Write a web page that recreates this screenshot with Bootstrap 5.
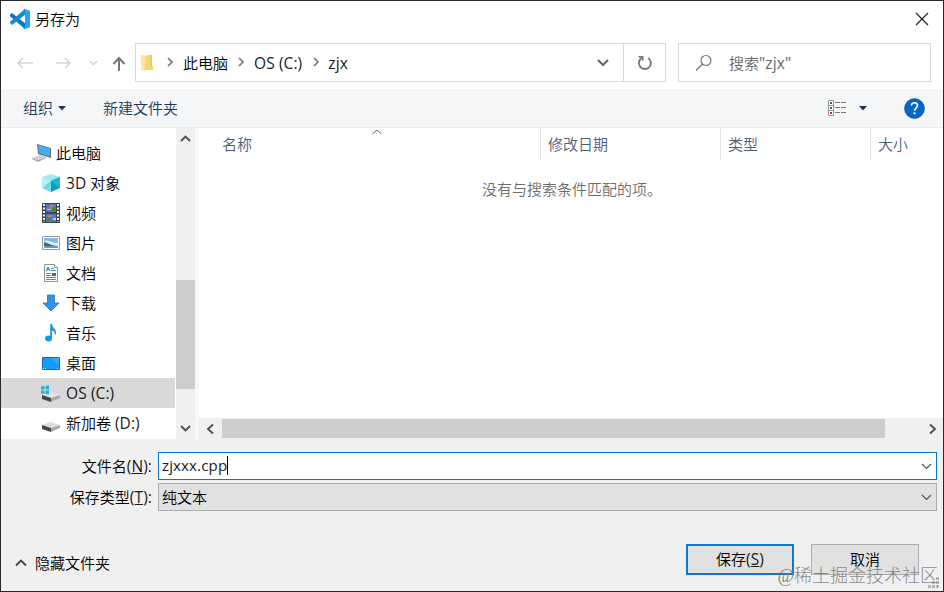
<!DOCTYPE html>
<html lang="zh-CN">
<head>
<meta charset="utf-8">
<meta name="viewport" content="width=device-width, initial-scale=1">
<title>另存为</title>
<link href="https://cdn.jsdelivr.net/npm/bootstrap@5.3.0/dist/css/bootstrap.min.css" rel="stylesheet">
<style>
body{font-family:"Open Sans","Noto Sans CJK SC",sans-serif;font-size:15px;font-weight:350;line-height:20px;color:#000;overflow:hidden}
svg{display:block;flex:none}
.lat{font-size:15.5px;font-weight:400;letter-spacing:.1px;color:#1a1a1a}
.search .lat{color:inherit}
.dialog{width:944px;height:592px;border:1px solid #29292b;background:#f0f0f0}
.titlebar{height:38px;padding:0 14px 2px 8px}
.addrbar{height:50px;padding:4px 12px 7px 16px}
.addr-box{width:531px;border:1px solid #d9d9d9;height:39px}
.crumb-gap{width:26px}
.crumb-gap.first{width:28px}
.refresh{width:42px;border-left:1px solid #d9d9d9}
.search{width:253px;height:39px;border:1px solid #d9d9d9;margin-left:12px;color:#666;padding-left:16px}
.toolbar{height:39px;background:#f4f6f8;border-bottom:1px solid #e9ebed;color:#1e395b;padding:0 18px 0 22px}
.new-folder{margin-left:36px}
.browse{height:311px}
.tree{width:175px;padding-top:10px;overflow:hidden}
.tree-item{height:30px;padding-left:39px}
.tree-item.root{padding-left:31px}
.tree-item.active{background:#d9d9d9;width:174px}
.tree-item svg{margin-right:4px}
.vbar{width:19px;background:#f0f0f0}
.vthumb{height:109px;margin-top:133px;background:#cdcdcd}
.vup{margin-top:7px}
.files{border-left:4px solid #f8f8f8}
.heads{height:32px;color:#4c607a}
.heads>div{padding:6px 0 0 7px;border-left:1px solid #e3e3e3}
.heads>.h-name{width:341px;padding-left:23px;border:0}
.h-date{width:180px}.h-type{width:150px}
.sort{position:absolute;left:173px;top:1px}
.empty{color:#6d6d6d;padding:19px 0 0 283px}
.hbar{height:21px;background:#f0f0f0}
.hthumb{width:663px;height:19px;background:#cdcdcd}
.bottom{height:152px;padding:13px 6px 0 0}
.lbl{width:151px;margin-right:6px}
.combo{height:28px;border:1px solid #adadad;background:#e1e1e1;padding:0 4px 0 3px}
.combo.focus{background:#fff;border-color:#0878c8}
.combo.focus>.lat{margin-top:-2px;font-size:15px;letter-spacing:.15px}
.combo-row{margin-top:3px}
.caret{width:1px;height:19px;background:#000;margin-top:-2px}
.dlg-btn{height:31px;width:108px;border:1px solid #adadad;border-radius:0;background:#e1e1e1;font-size:15px;font-weight:350;line-height:20px;padding:0 0 1px;color:#000}
.dlg-btn.main{border:2px solid #0878d0;margin-right:17px}
.actions{margin-top:33px;padding:0 18px 0 14px}
.less{padding-top:6px}
.stamp{position:absolute;right:5px;bottom:3px;font-size:18px;line-height:24px;color:#777;font-family:"Liberation Serif","Noto Sans CJK SC",sans-serif;font-weight:300;opacity:.85;white-space:nowrap}
.grip{position:absolute;right:3px;bottom:2px}
</style>
<script src="https://cdn.jsdelivr.net/npm/bootstrap@5.3.0/dist/js/bootstrap.bundle.min.js"></script>
</head>
<body>
<div class="dialog position-relative d-flex flex-column">
  <header class="titlebar bg-white d-flex align-items-center">
    <svg width="22" height="22" viewBox="0 0 22 22"><path fill="#0879be" d="M1 6.8 3 5l13 10.2V21L1 8.3z"/><path fill="#168bd0" d="M1 15.1 3 17 16 6.8V1L1 13.8z"/><path fill="#27a4f2" d="m15.5.8 5.5 2v16.5l-5.5 2q-1 .2-1.5-.5l2-1.600V2.8L14 1.2z"/></svg>
    <span class="ms-1">另存为</span>
    <svg class="ms-auto" width="14" height="14" viewBox="0 0 14 14" stroke="#222" stroke-width="1.2"><path d="m1 1 12 12M13 1 1 13"/></svg>
  </header>

  <nav class="addrbar bg-white d-flex align-items-center">
    <svg width="118" height="20" viewBox="0 0 118 20" fill="none" stroke="#d5d5d5" stroke-width="1.6"><path d="M16 10H1m5-5-5 5 5 5M39 10h14m-5-5 5 5-5 5M73 8l3.500 3.500L80 8"/><path stroke="#777" stroke-width="2" d="M102 18V5m-5.500 6 5.500-6 5.500 6"/></svg>
    <div class="addr-box d-flex align-items-center">
      <svg class="ms-1" width="15" height="18" viewBox="0 0 15 18"><path fill="#f4d675" d="M1 2h5l1-1h5v11h1v4H1z"/><path fill="#ffe69a" d="M1 1h4v16l-4-1z"/><path fill="#e9c560" d="M10.500 1H12v12h-1.500z"/></svg>
      <svg class="crumb-gap first" height="12" viewBox="0 0 28 12" fill="none" stroke="#777" stroke-width="1.7"><path d="m13 1 4 4-4 4"/></svg>
      <span>此电脑</span>
      <svg class="crumb-gap" height="12" viewBox="0 0 26 12" fill="none" stroke="#777" stroke-width="1.7"><path d="m11 1 4 4-4 4"/></svg>
      <span class="lat">OS (C:)</span>
      <svg class="crumb-gap" height="12" viewBox="0 0 26 12" fill="none" stroke="#777" stroke-width="1.7"><path d="m12 1 4 4-4 4"/></svg>
      <span class="lat">zjx</span>
      <svg class="ms-auto" width="26" height="8" viewBox="0 0 26 8" fill="none" stroke="#666" stroke-width="2"><path d="m1 1 5 5 5-5"/></svg>
      <div class="refresh h-100 d-flex align-items-center justify-content-center">
        <svg width="16" height="16" viewBox="0 0 16 16" fill="none" stroke="#777" stroke-width="1.900"><path d="M11.200 3A6 6 0 1 1 5 2.700"/><path stroke-width="1.500" d="M1.500 1.800h4.200v4"/></svg>
      </div>
    </div>
    <div class="search d-flex align-items-center">
      <svg width="18" height="18" viewBox="0 0 18 18" fill="none" stroke="#777" stroke-width="1.200"><circle cx="11" cy="6.500" r="5"/><path d="m7.500 10-6.500 6.500"/></svg>
      <span class="ms-3">搜索<span class="lat">"zjx"</span></span>
    </div>
  </nav>

  <div class="toolbar d-flex align-items-center">
    <span>组织</span>
    <svg class="ms-1" width="10" height="5" viewBox="0 0 10 5"><path fill="#1e395b" d="M1 0h8L5 4.500z"/></svg>
    <span class="new-folder">新建文件夹</span>
    <svg class="ms-auto" width="20" height="17" viewBox="0 0 20 17"><path fill="#fff" stroke="#8c9a8c" d="M1.500.5h5v15h-5zM1.500 5.500h5m-5 5h5"/><path fill="#556" d="M3 2h2v2H3zM3 7h2v2H3z"/><path fill="#c03030" d="M3 12h2v2H3z"/><path stroke="#777" stroke-dasharray="5 1" d="M8 2.500h11m-11 5h11m-11 5h11"/></svg>
    <svg class="ms-2 me-4" width="17" height="5" viewBox="0 0 17 5"><path fill="#17365a" d="M4 0h8L8 4.500z"/></svg>
    <svg class="ms-2" width="21" height="21" viewBox="0 0 21 21"><circle cx="10.500" cy="10.500" r="9.800" fill="#0868c4" stroke="#0757a5"/><path d="M7.500 7.500C7.500 3.800 13.500 4 13.500 7.500c0 2.400-3 2.700-3 5.200" fill="none" stroke="#fff" stroke-width="1.600"/><circle cx="10.500" cy="15.300" r="1.100" fill="#fff"/></svg>
  </div>

  <main class="browse bg-white d-flex">
    <div class="tree">
      <div class="tree-item root d-flex align-items-center">
        <svg width="20" height="20" viewBox="0 0 20 20"><path fill="#ccd3d8" d="m0 15 8-3 6 2-8 4z"/><path fill="#9ba5ac" d="m0 15 6 2.500 8-3.500v1l-8 4-6-3z"/><path fill="#62717c" d="m5 1 14 4v10L6 11z"/><path fill="#45abf2" d="m6 2 12 3.500v8L7 10z"/></svg>
        <span>此电脑</span>
      </div>
      <div class="tree-item d-flex align-items-center">
        <svg width="22" height="20" viewBox="0 0 22 20"><path fill="#9ceaf2" d="m11 1 9 3-9 4-9-4z"/><path fill="#6edae6" d="m2 4 9 4v11l-9-4z"/><path fill="#0f9dbb" d="m20 4-9 4v11l9-4z"/><path fill="#b5f0f5" d="m2 4 9 4-9 7z"/><path fill="#23b5cd" d="m20 4-9 4 9 7z"/></svg>
        <span><span class="lat">3D</span> 对象</span>
      </div>
      <div class="tree-item d-flex align-items-center">
        <svg width="22" height="20" viewBox="0 0 22 20"><path fill="#444" d="M2 0h18v20H2z"/><path stroke="#eee" stroke-width="2" stroke-dasharray="2 1.500" d="M4 1v18M18 1v18"/><path fill="#4779d4" d="M6 1h10v8H6zM6 11h10v8H6z"/><path fill="#e07730" d="M10 2h4v4h-4zM8 12h4v2H8z"/><path fill="#3d8b3d" d="M12 4h4v4h-4zM6 16l4-1v3H6z"/><path fill="#f1cf45" d="M7 6h4v1H7zM13 15h3v2h-3z"/></svg>
        <span>视频</span>
      </div>
      <div class="tree-item d-flex align-items-center">
        <svg width="22" height="20" viewBox="0 0 22 20"><path fill="#fff" stroke="#999" d="M2.500 3.500h17v13h-17z"/><path fill="#82b6ef" d="M4 5h14v10H4z"/><path fill="#dff2fc" d="M4 8c4-2 7 2 14 2v3H4z"/><path fill="#347367" d="M4 9c5 1 8 4 14 4v1H4z"/><path fill="#5b9fc8" d="M4 13h14v2H4z"/></svg>
        <span>图片</span>
      </div>
      <div class="tree-item d-flex align-items-center">
        <svg width="22" height="20" viewBox="0 0 22 20"><path fill="#fff" stroke="#909090" d="M4.500 1.500h10l3 3v14h-13z"/><path stroke="#999" fill="#eee" d="M14.500 1.500v3h3"/><path stroke="#2d9bc7" d="M11 5.500h3M11 7.500h5M6 10.500h5M6 12.500h5M6 14.500h10M6 16.500h10"/><path fill="none" stroke="#1287c0" d="m6 8 2-4 2 4M7 6.500h2"/><path fill="#33709c" d="M12 10h4v3h-4z"/></svg>
        <span>文档</span>
      </div>
      <div class="tree-item d-flex align-items-center">
        <svg width="22" height="20" viewBox="0 0 22 20"><path fill="#3291e8" stroke="#2473b9" stroke-width=".8" d="M7.500 2h7v8H19l-8 8-8-8h4.500z"/></svg>
        <span>下载</span>
      </div>
      <div class="tree-item d-flex align-items-center">
        <svg width="22" height="20" viewBox="0 0 22 20"><ellipse cx="8.500" cy="15.500" rx="3.500" ry="3" fill="#129ae5"/><path fill="#129ae5" d="M10.200 1H12c0 4 5 4.500 4 10l-1 1c0-3-1-4-3-4.500v8h-1.800z"/></svg>
        <span>音乐</span>
      </div>
      <div class="tree-item d-flex align-items-center">
        <svg width="22" height="20" viewBox="0 0 22 20"><path fill="#199afb" stroke="#0870b8" d="M2.500 4.500h17v12h-17z"/><path stroke="#9bdcff" stroke-dasharray="1 1" d="M3 15.500h3m11 0h2"/><path fill="#38a9fa" d="m11 5 8 0v7z"/></svg>
        <span>桌面</span>
      </div>
      <div class="tree-item active d-flex align-items-center">
        <svg width="22" height="20" viewBox="0 0 22 20"><path fill="#e4e4e4" d="m2 12 8-3 10 3-9 3z"/><path fill="#444" d="m2 12 9 3v4l-9-3z"/><path fill="#aaa" d="m20 12-9 3v4l9-4z"/><path fill="#19b5e8" d="M1 3.500 4.500 3v3.500H1zM5.500 2.800 9 2.500v4H5.500zM1 7.500h3.500V11L1 10.500zM5.500 7.500H9v4l-3.500-.5z"/></svg>
        <span class="lat">OS (C:)</span>
      </div>
      <div class="tree-item d-flex align-items-center">
        <svg width="22" height="20" viewBox="0 0 22 20"><path fill="#ddd" d="m2 12 8-3 10 3-9 3z"/><path fill="#444" d="m2 12 9 3v4l-9-3z"/><path fill="#aaa" d="m20 12-9 3v4l9-4z"/></svg>
        <span class="text-nowrap">新加卷 <span class="lat">(D:)</span></span>
      </div>
    </div>
    <div class="vbar d-flex flex-column align-items-center">
      <svg class="vup" width="11" height="12" viewBox="0 0 11 12" fill="none" stroke="#505050" stroke-width="1.900"><path d="m1 6 4.500-4.500L10 6"/></svg>
      <div class="vthumb w-100"></div>
      <svg class="mt-auto mb-1" width="11" height="12" viewBox="0 0 11 12" fill="none" stroke="#505050" stroke-width="1.900"><path d="m1 3 4.500 4.500L10 3"/></svg>
    </div>
    <section class="files flex-fill d-flex flex-column">
      <div class="heads d-flex position-relative">
        <div class="h-name">名称</div>
        <div class="h-date">修改日期</div>
        <div class="h-type">类型</div>
        <div>大小</div>
        <svg class="sort" width="10" height="6" viewBox="0 0 10 6" fill="none" stroke="#666"><path d="m.5 5 4.500-4L9.500 5"/></svg>
      </div>
      <div class="empty">没有与搜索条件匹配的项。</div>
      <div class="hbar mt-auto d-flex align-items-center">
        <svg width="23" height="12" viewBox="0 0 23 12" fill="none" stroke="#505050" stroke-width="1.900"><path d="M14 1.500 9 6l5 4.500"/></svg>
        <div class="hthumb"></div>
        <svg class="ms-auto" width="16" height="12" viewBox="0 0 16 12" fill="none" stroke="#505050" stroke-width="1.900"><path d="m3 1.500 5 4.500-5 4.500"/></svg>
      </div>
    </section>
  </main>

  <footer class="bottom">
    <div class="d-flex align-items-center">
      <label class="lbl text-end">文件名<span class="lat">(<u>N</u>):</span></label>
      <div class="combo focus flex-fill d-flex align-items-center">
        <span class="lat">zjxxx.cpp</span><span class="caret"></span>
        <svg class="ms-auto" width="11" height="7" viewBox="0 0 11 7" fill="none" stroke="#555" stroke-width="1.200"><path d="m1 1 4.500 4.500L10 1"/></svg>
      </div>
    </div>
    <div class="combo-row d-flex align-items-center">
      <label class="lbl text-end">保存类型<span class="lat">(<u>T</u>):</span></label>
      <div class="combo flex-fill d-flex align-items-center">
        <span>纯文本</span>
        <svg class="ms-auto" width="11" height="7" viewBox="0 0 11 7" fill="none" stroke="#555" stroke-width="1.200"><path d="m1 1 4.500 4.500L10 1"/></svg>
      </div>
    </div>
    <div class="actions d-flex align-items-center">
      <div class="less d-flex align-items-center">
        <svg width="12" height="8" viewBox="0 0 12 8" fill="none" stroke="#444" stroke-width="1.900"><path d="m1 6.500 5-5 5 5"/></svg>
        <span class="ms-2">隐藏文件夹</span>
      </div>
      <button class="btn dlg-btn main ms-auto">保存<span class="lat">(<u>S</u>)</span></button>
      <button class="btn dlg-btn">取消</button>
    </div>
  </footer>
  <svg class="grip" width="12" height="12" viewBox="0 0 12 12" fill="#b5b5b5"><path d="M8 0h3v3H8zM4 4h3v3H4zM8 4h3v3H8zM0 8h3v3H0zM4 8h3v3H4zM8 8h3v3H8z"/></svg>
  <div class="stamp">@稀土掘金技术社区</div>
</div>
</body>
</html>
